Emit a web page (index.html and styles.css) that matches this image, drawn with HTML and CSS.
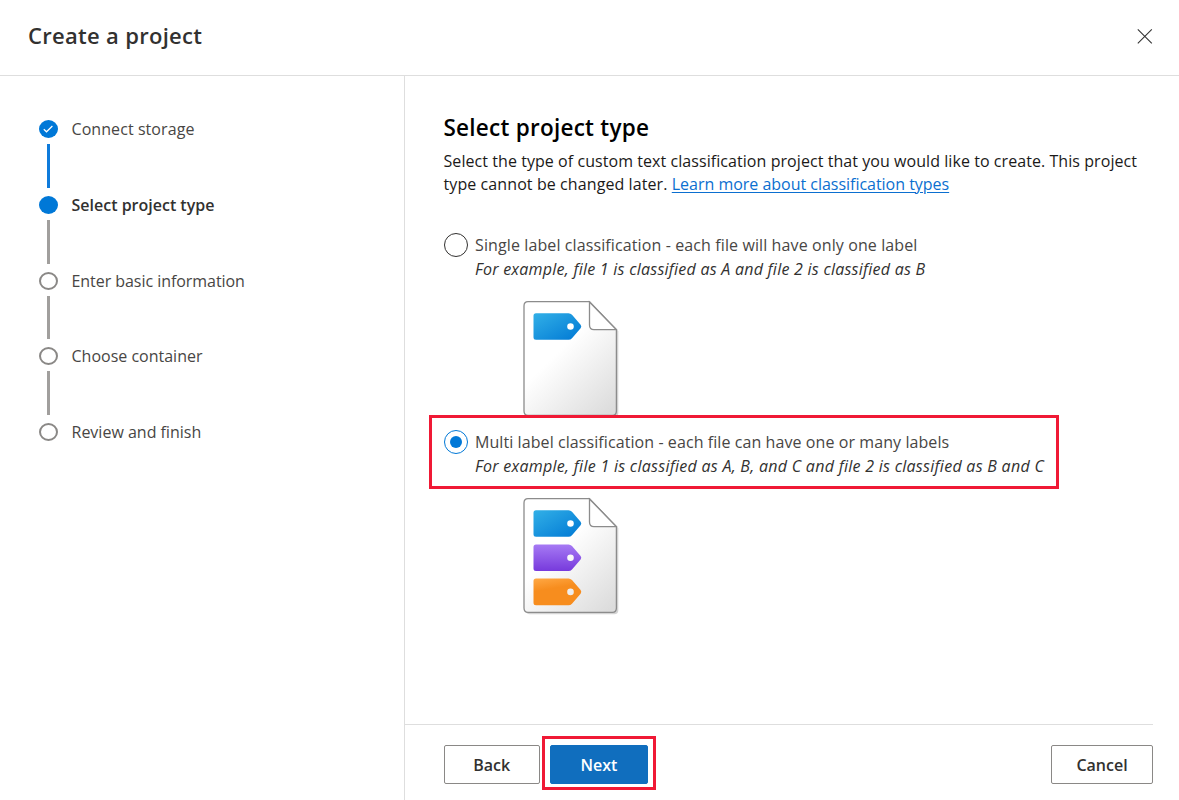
FILE: index.html
```html
<!DOCTYPE html>
<html lang="en">
<head>
<meta charset="utf-8">
<title>Create a project</title>
<link rel="stylesheet" href="styles.css">
</head>
<body>
<div class="dialog">
  <header class="header">
    <h1 class="title">Create a project</h1>
    <button class="close" aria-label="Close">
      <svg width="16" height="16" viewBox="0 0 16 16"><path d="M.8 1.3 14.8 15.3M14.8 1.3.8 15.3" stroke="#333" stroke-width="1.1" fill="none"/></svg>
    </button>
  </header>
  <div class="body">
    <nav class="steps">
      <div class="step"><span class="dot dot-done"><svg width="18" height="18" viewBox="0 0 18 18"><path d="M4.8 9.2 7.5 11.8 13.4 6" stroke="#fff" stroke-width="1.2" fill="none"/></svg></span><span class="step-text s1">Connect storage</span></div>
      <div class="line line-done"></div>
      <div class="step"><span class="dot dot-done"></span><span class="step-text current">Select project type</span></div>
      <div class="line"></div>
      <div class="step"><span class="dot"></span><span class="step-text s3">Enter basic information</span></div>
      <div class="line"></div>
      <div class="step"><span class="dot"></span><span class="step-text">Choose container</span></div>
      <div class="line"></div>
      <div class="step"><span class="dot"></span><span class="step-text">Review and finish</span></div>
    </nav>
    <main class="main">
      <section class="content">
        <h2 class="heading">Select project type</h2>
        <p class="intro"><span class="i1">Select the type of custom text classification project that you would like to create. This project</span><br><span class="i2">type cannot be changed later. </span><a class="link" href="#">Learn more about classification types</a></p>
        <div class="option">
          <span class="radio"></span>
          <div class="option-text">
            <div class="label"><span class="l1">Single label classification - each file will have only one label</span></div>
            <div class="example"><span class="e1">For example, file 1 is classified as A and file 2 is classified as B</span></div>
          </div>
        </div>
        <svg class="file" width="98" height="120" viewBox="0 0 98 120">
          <defs>
            <linearGradient id="paper" x1="0.1" y1="0" x2="0.9" y2="1"><stop offset=".4" stop-color="#fff"/><stop offset="1" stop-color="#dcdcdc"/></linearGradient>
            <linearGradient id="blue" x1="0" y1="0" x2="1" y2="1"><stop stop-color="#32b0e7"/><stop offset="1" stop-color="#0078d4"/></linearGradient>
            <linearGradient id="violet" x1="0" y1="0" x2="0" y2="1"><stop stop-color="#a67af4"/><stop offset="1" stop-color="#773adc"/></linearGradient>
            <linearGradient id="orange" x1="0" y1="0" x2=".3" y2="1"><stop stop-color="#ffa844"/><stop offset=".45" stop-color="#f78d1e"/></linearGradient>
            <path id="sheet" d="M5 1.7H66.5L93.4 29.7V111Q93.4 115.3 89.4 115.3H5Q1 115.3 1 111V6Q1 1.7 5 1.7Z"/>
            <path id="tag" d="M13 13.2H45.5Q47.5 13.2 49 14.7L57.6 24.7Q59 26.5 57.6 28.3L49 38.3Q47.5 39.8 45.5 39.8H13Q10.5 39.8 10.5 37.3V15.7Q10.5 13.2 13 13.2ZM47.5 23.2A3.3 3.3 0 1 0 47.5 29.8A3.3 3.3 0 1 0 47.5 23.2Z" fill-rule="evenodd"/>
          </defs>
          <use href="#sheet" x="1.9" y="1.9" fill="#d4d4d4"/>
          <use href="#sheet" fill="url(#paper)" stroke="#8c8c8c" stroke-width="1.3"/>
          <path d="M66.5 2V25Q66.5 29.7 71 29.7H93.4Z" fill="#fff" stroke="#8c8c8c" stroke-width="1.3"/>
          <use href="#tag" fill="url(#blue)"/>
        </svg>
        <div class="option option-selected">
          <span class="radio radio-on"></span>
          <div class="option-text">
            <div class="label"><span class="l2">Multi label classification - each file can have one or many labels</span></div>
            <div class="example"><span class="e2">For example, file 1 is classified as A, B, and C and file 2 is classified as B and C</span></div>
          </div>
        </div>
        <svg class="file" width="98" height="120" viewBox="0 0 98 120">
          <use href="#sheet" x="1.9" y="1.9" fill="#d4d4d4"/>
          <use href="#sheet" fill="url(#paper)" stroke="#8c8c8c" stroke-width="1.3"/>
          <path d="M66.5 2V25Q66.5 29.7 71 29.7H93.4Z" fill="#fff" stroke="#8c8c8c" stroke-width="1.3"/>
          <use href="#tag" fill="url(#blue)"/>
          <use href="#tag" y="34.2" fill="url(#violet)"/>
          <use href="#tag" y="68.4" fill="url(#orange)"/>
        </svg>
      </section>
      <footer class="footer">
        <button class="button back">Back</button>
        <span class="highlight"><button class="button primary">Next</button></span>
        <button class="button cancel">Cancel</button>
      </footer>
    </main>
  </div>
</div>
</body>
</html>
```
FILE: styles.css
```css
* { box-sizing: border-box; }
body { margin: 0; background: #fff; color: #323130; font: 16px/24px "Open Sans", "Noto Sans", sans-serif; }
h1, h2, p { margin: 0; }
button { font-family: inherit; }
.dialog { display: flex; flex-direction: column; height: 800px; overflow: hidden; }
.header { display: flex; justify-content: space-between; align-items: center; height: 76px; padding: 0 26px 3px 28px; border-bottom: 1px solid #dedede; }
.title { font-size: 22px; line-height: 30px; font-weight: 600; color: #323130; white-space: nowrap; letter-spacing: 0.3px; padding-bottom: 2px; }
.close { display: flex; padding: 0; border: 0; background: none; width: 16px; }
.body { display: flex; flex: 1; min-height: 0; }
.steps { width: 405px; padding: 41px 0 0 39px; border-right: 1px solid #dedede; }
.step { display: flex; align-items: center; height: 24px; gap: 13.5px; }
.dot { width: 19px; height: 18px; border: 2px solid #8a8886; border-radius: 50%; flex: none; }
.dot-done { border: 0; background: #0078d7; }
.dot svg { display: block; }
.step-text { white-space: nowrap; color: #484644; }
.s1 { letter-spacing: 0.07px; }
.s3 { letter-spacing: -0.05px; }
.current { font-weight: 600; color: #323130; }
.line { width: 3px; height: 43.8px; margin: 3px 0 5px 8px; background: #a19f9d; }
.line-done { background: #0f7bdb; }
.main { flex: 1; display: flex; flex-direction: column; min-width: 0; }
.content { flex: 1; display: flex; flex-direction: column; align-items: flex-start; padding: 36px 0 0 24px; }
.heading { font-size: 22.5px; line-height: 32px; font-weight: 600; color: #000; margin-left: 14.5px; white-space: nowrap; letter-spacing: 0.25px; }
.intro { margin: 6px 0 0 14.5px; line-height: 23px; color: #1b1a19; white-space: nowrap; }
.i1 { letter-spacing: 0.062px; }
.i2 { letter-spacing: 0.09px; }
.link { color: #0b6fd0; text-decoration: underline; text-underline-offset: 2px; text-decoration-thickness: 1px; letter-spacing: -0.02px; }
.option { display: flex; gap: 7.5px; width: 630px; height: 74px; margin-top: 22px; padding: 15px 0 0 14.5px; white-space: nowrap; }
.radio { width: 24px; height: 24px; border: 1px solid #323130; border-radius: 50%; flex: none; display: flex; align-items: center; justify-content: center; }
.radio-on { border-color: #0078d7; }
.radio-on::after { content: ""; width: 12px; height: 12px; border-radius: 50%; background: #0078d7; }
.label { color: #484644; }
.example { font-style: italic; color: #323130; }
.l1 { letter-spacing: 0.11px; }
.l2 { letter-spacing: 0.08px; }
.e1 { letter-spacing: 0.25px; }
.e2 { letter-spacing: 0.28px; }
.option-selected { margin-top: -5px; padding: 12px 0 0 11.5px; border: 3px solid #f01935; background: #fff; z-index: 1; }
.file { display: block; margin: 8px 0 0 94px; flex: none; }
.footer { display: flex; align-items: center; height: 76px; margin-right: 26px; padding: 3px 0 0 38.5px; border-top: 1px solid #dedede; }
.button { height: 39px; border: 1px solid #8a8886; border-radius: 2px; background: #fff; color: #323130; font-size: 16px; font-weight: 600; padding: 2px 0 0; white-space: nowrap; }
.back { width: 96.5px; }
.highlight { display: flex; align-items: center; justify-content: center; width: 114px; height: 54px; margin: 0 0 2px 2px; padding-top: 2px; border: 3px solid #f01935; }
.primary { width: 98px; border-color: #106ebe; background: #106ebe; color: #fff; }
.cancel { width: 102px; margin-left: auto; }
```
